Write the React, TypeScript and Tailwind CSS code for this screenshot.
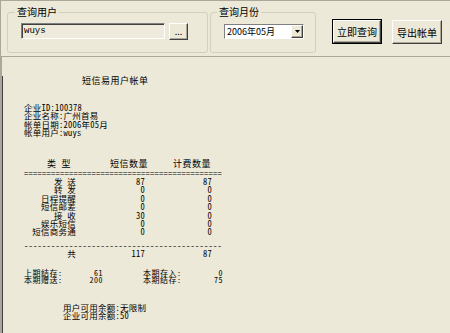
import React from "react";

const cjk = "font-[family-name:'Noto_Sans_CJK_SC','Liberation_Sans',sans-serif]";
const mono = "font-[family-name:'Noto_Sans_Mono_CJK_SC','Liberation_Mono','Noto_Sans_CJK_SC',monospace]";

const filas = [
  { tipo: "发 送", sms: "87", fee: "87" },
  { tipo: "转 发", sms: "0", fee: "0" },
  { tipo: "日程提醒", sms: "0", fee: "0" },
  { tipo: "短信邮差", sms: "0", fee: "0" },
  { tipo: "接 收", sms: "30", fee: "0" },
  { tipo: "娱乐短信", sms: "0", fee: "0" },
  { tipo: "短信商务通", sms: "0", fee: "0" },
];

const raised =
  "border border-t-white border-l-white border-b-[#404040] border-r-[#404040] shadow-[inset_-1px_-1px_0_#aca899] bg-[#ece9d8]";

const Boton = ({ texto, principal }: { texto: string; principal?: boolean }) =>
  principal ? (
    <div className="w-[50px] h-[25px] border border-black">
      <div className={`w-full h-full flex items-center justify-center text-[10px] text-black ${raised}`}>{texto}</div>
    </div>
  ) : (
    <div className={`w-[50px] h-[24px] mt-px flex items-center justify-center text-[10px] text-black ${raised}`}>{texto}</div>
  );

export default function App() {
  return (
    <div className={`w-[450px] h-[333px] bg-[#ece9d8] overflow-hidden flex flex-col ${cjk}`}>
      {/* barra de consulta */}
      <div className="h-[56px] shrink-0 border-t border-l border-[#aca899] flex items-start">
        <fieldset className="ml-[6px] mt-[6px] w-[201px] h-[46px] border border-[#d0d0bf] rounded-[3px] px-[13px]">
          <legend className="ml-[-6px] px-[2px] text-[10px] leading-[10px] text-black">查询用户</legend>
          <div className="flex items-start gap-[4px] mt-[6px]">
            <div className="w-[144px] h-[16px] border border-t-[#808080] border-l-[#808080] border-b-white border-r-white shadow-[inset_1px_1px_0_#404040] bg-[#eeebdd] flex items-center pl-[2px] pt-[2px] text-[9px] text-black font-[family-name:'Liberation_Mono',monospace]">
              wuys
            </div>
            <div className={`w-[19px] h-[17px] flex items-center justify-center text-[9px] leading-none text-black ${raised}`}>...</div>
          </div>
        </fieldset>
        <fieldset className="ml-[2px] mt-[6px] w-[106px] h-[46px] border border-[#d0d0bf] rounded-[3px] pl-[13px]">
          <legend className="ml-[-7px] px-[2px] text-[10px] leading-[10px] text-black">查询月份</legend>
          <div className="mt-[7px] w-[80px] h-[15px] border border-t-[#808080] border-l-[#808080] border-b-white border-r-white bg-white flex items-stretch">
            <div className="flex-1 flex items-center pl-[2px] text-[9px] text-black">2006年05月</div>
            <div className={`w-[12px] flex items-center justify-center ${raised}`}>
              <svg width="5" height="3" viewBox="0 0 5 3"><path d="M0 0h5L2.5 3z" fill="#000" /></svg>
            </div>
          </div>
        </fieldset>
        <div className="ml-[16px] mt-[18px] flex items-start gap-[10px]">
          <Boton texto="立即查询" principal />
          <Boton texto="导出帐单" />
        </div>
      </div>

      {/* cuerpo del informe */}
      <div className="flex-1 border-t border-l-2 border-[#aca899]">
        <div className={`h-full border-l border-[#404040] text-[8.5px] tracking-[0.25px] text-black ${mono}`}>
          <div className="mt-[19px] pl-[79px] text-[9px] tracking-[0.5px] leading-[9px]">短信易用户帐单</div>

          <div className="mt-[18px] pl-[21px] leading-[8.4px]">
            <div>企业ID:100378</div>
            <div>企业名称:广州首易</div>
            <div>帐单日期:2006年05月</div>
            <div>帐单用户:wuys</div>
          </div>

          <div className="mt-[22px] pl-[21px] grid grid-cols-[86px_63px_60px] text-[9px] tracking-[0.5px] leading-[9px]">
            <div className="pl-[23px]">类 型</div>
            <div>短信数量</div>
            <div>计费数量</div>
          </div>

          <div className="mt-[1px] pl-[21px] leading-[8.4px]">
            <div className="whitespace-nowrap">{"=".repeat(44)}</div>
            {filas.map((f) => (
              <div key={f.tipo} className="grid grid-cols-[52px_69px_67px]">
                <div className="text-right whitespace-pre">{f.tipo}</div>
                <div className="text-right">{f.sms}</div>
                <div className="text-right">{f.fee}</div>
              </div>
            ))}
            <div className="mt-[5px] whitespace-nowrap">{"-".repeat(44)}</div>
            <div className="grid grid-cols-[52px_69px_67px]">
              <div className="text-right">共</div>
              <div className="text-right">117</div>
              <div className="text-right">87</div>
            </div>
          </div>

          <div className="mt-[11px] pl-[21px] text-[8px] tracking-[0.5px] leading-[7.6px]">
            <div className="grid grid-cols-[79px_40px_80px]">
              <div className="flex justify-between"><span>上期结存:</span><span>61</span></div>
              <div />
              <div className="flex justify-between"><span>本期存入:</span><span>0</span></div>
            </div>
            <div className="grid grid-cols-[79px_40px_80px]">
              <div className="flex justify-between"><span>本期赠送:</span><span>200</span></div>
              <div />
              <div className="flex justify-between"><span>本期结存:</span><span>75</span></div>
            </div>
          </div>

          <div className="mt-[19px] pl-[60px] leading-[8.5px]">
            <div>用户可用余额:无限制</div>
            <div>企业可用余额:50</div>
          </div>
        </div>
      </div>
    </div>
  );
}
